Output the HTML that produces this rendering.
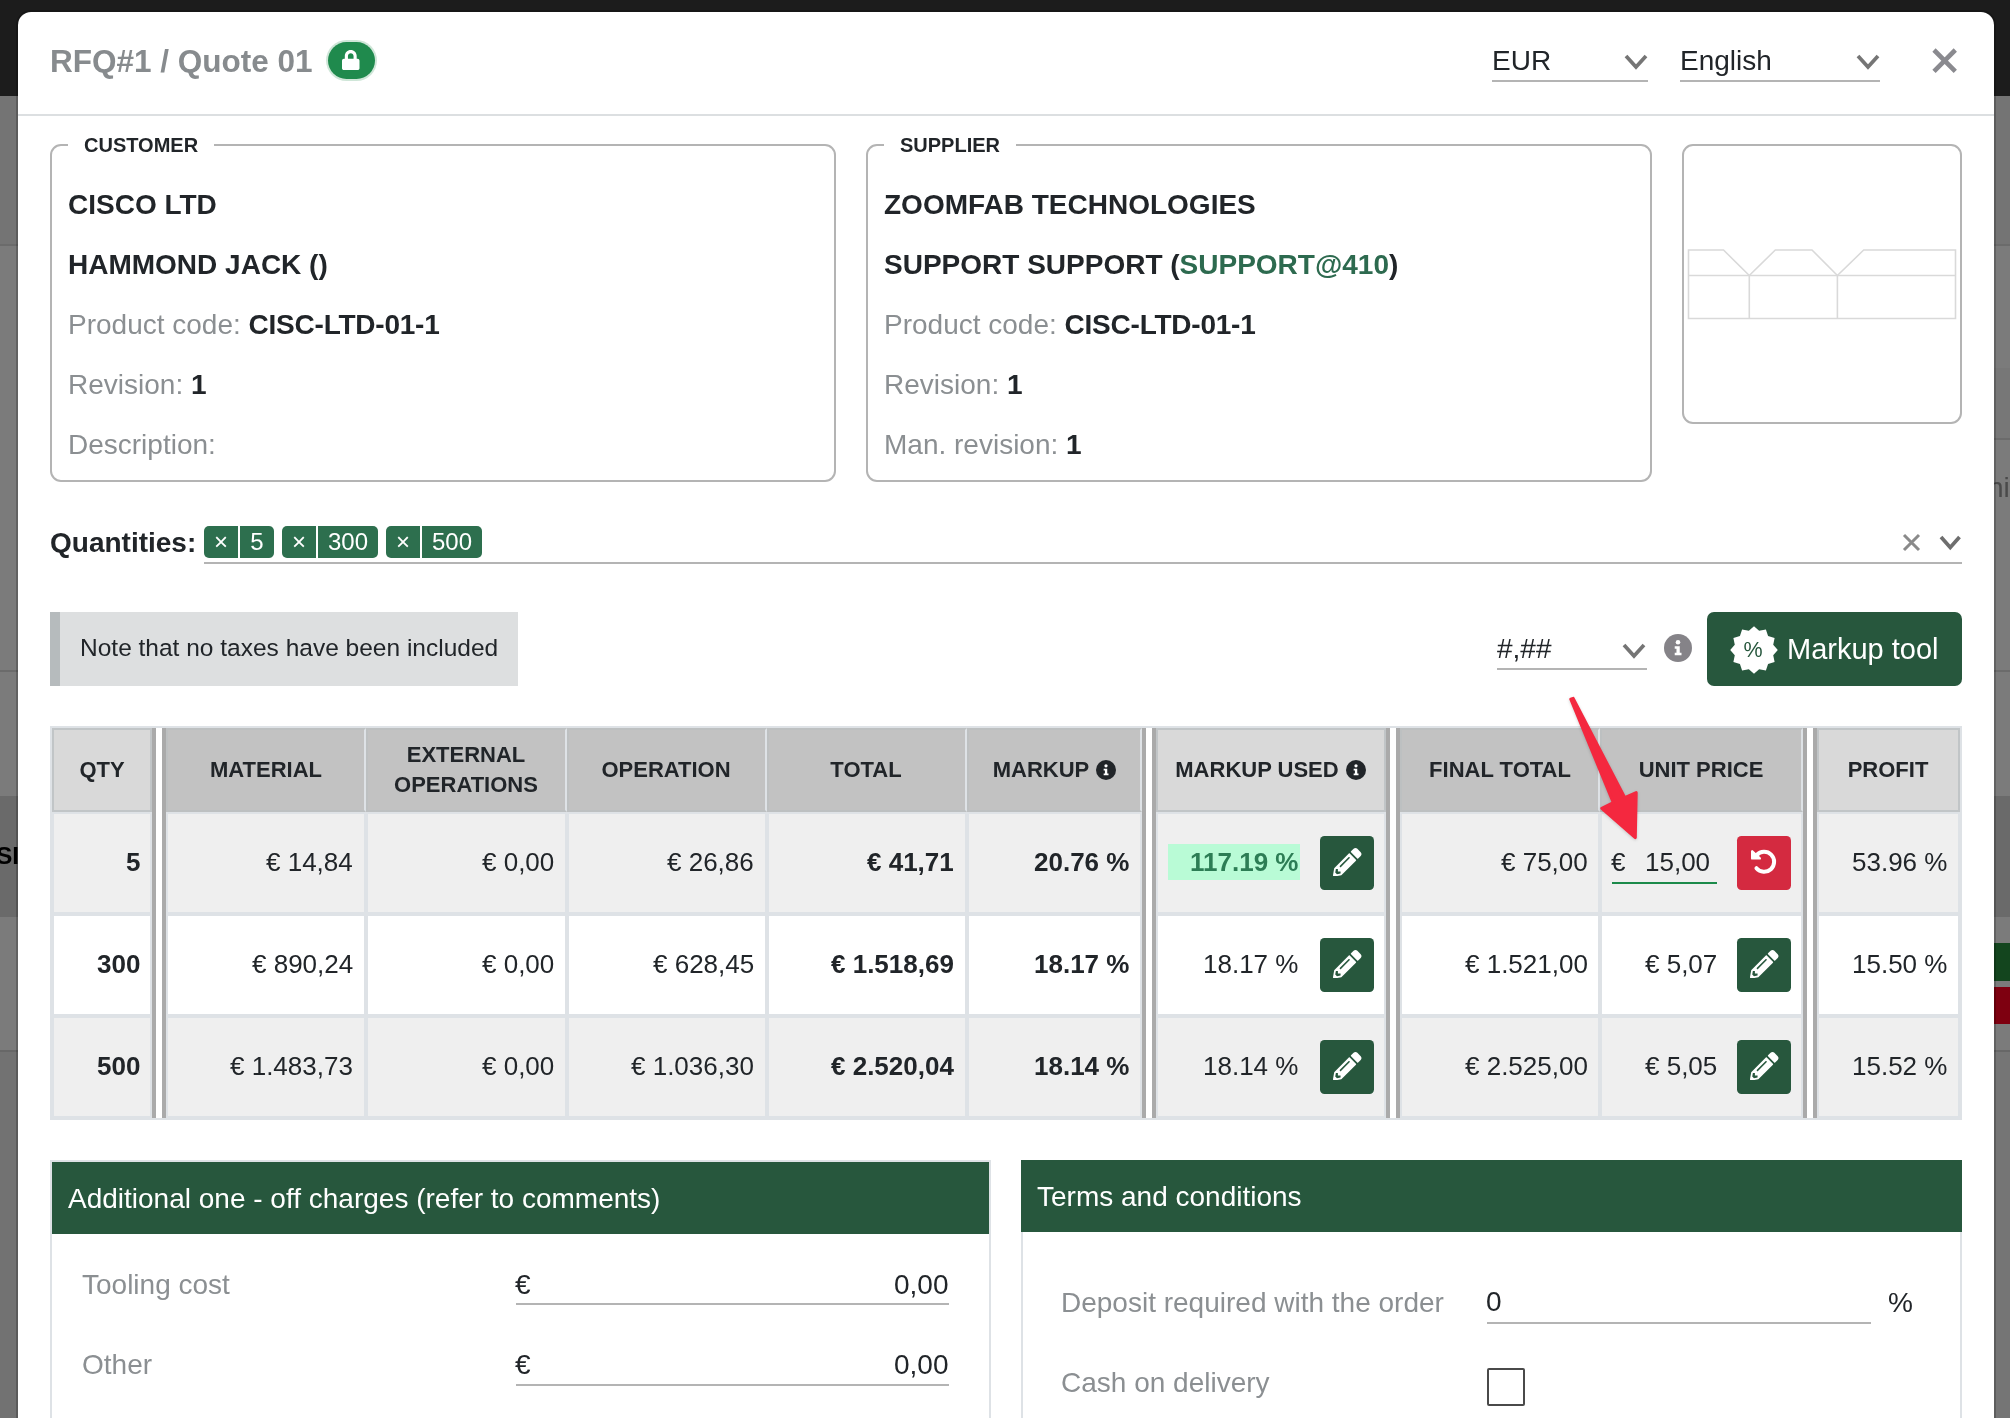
<!DOCTYPE html>
<html><head><meta charset="utf-8"><title>Quote</title><style>
*{box-sizing:border-box;margin:0;padding:0}
html,body{width:2010px;height:1418px;overflow:hidden;background:#7b7b7b}
body{font-family:"Liberation Sans",sans-serif;font-size:28px;color:#212529;position:relative}
.a{position:absolute}
.t{position:absolute;white-space:nowrap;height:100px;line-height:100px;will-change:transform}
.b{font-weight:700}
.r{text-align:right}
.c{text-align:center}
.mut{color:#8b8f92}
</style></head><body>
<div class="a" style="left:0px;top:0px;width:2010px;height:96px;background:#1c1c1c"></div>
<div class="a" style="left:0px;top:96px;width:18px;height:148px;background:#747474"></div>
<div class="a" style="left:0px;top:244px;width:18px;height:2px;background:#6b6b6b"></div>
<div class="a" style="left:0px;top:670px;width:18px;height:2px;background:#6b6b6b"></div>
<div class="a" style="left:0px;top:796px;width:18px;height:121px;background:#6a6a6a"></div>
<div class="a" style="left:0px;top:1050px;width:18px;height:368px;background:#727272"></div>
<div class="a" style="left:0px;top:1050px;width:18px;height:2px;background:#676767"></div>
<div class="t b" style="left:-4.5px;top:805.5px;font-size:24.5px;color:#000">SI</div>
<div class="a" style="left:1994px;top:96px;width:16px;height:148px;background:#747474"></div>
<div class="a" style="left:1994px;top:244px;width:16px;height:2px;background:#6b6b6b"></div>
<div class="a" style="left:1994px;top:368px;width:16px;height:70px;background:#777777"></div>
<div class="a" style="left:1994px;top:438px;width:16px;height:2px;background:#6b6b6b"></div>
<div class="a" style="left:1994px;top:670px;width:16px;height:2px;background:#6b6b6b"></div>
<div class="a" style="left:1994px;top:796px;width:16px;height:121px;background:#6a6a6a"></div>
<div class="a" style="left:1994px;top:943px;width:16px;height:38px;background:#13451e"></div>
<div class="a" style="left:1994px;top:987px;width:16px;height:37px;background:#7e0010"></div>
<div class="a" style="left:1994px;top:1050px;width:16px;height:368px;background:#757575"></div>
<div class="a" style="left:1994px;top:1050px;width:16px;height:2px;background:#676767"></div>
<div class="t " style="left:1987.5px;top:438px;font-size:28px;color:#4a4a4a">ni</div>
<div class="a" style="left:16px;top:10px;width:1980px;height:1490px;background:#fff;background-clip:padding-box;border:2px solid rgba(0,0,0,.2);border-radius:15px 15px 0 0"></div>
<div class="a" style="left:18px;top:114px;width:1976px;height:2px;background:#dcdfe1"></div>
<div class="t b" style="left:50px;top:10.5px;font-size:31.5px;color:#878b8e">RFQ#1 / Quote 01</div>
<div class="t " style="left:1492px;top:10.5px;font-size:28px;">EUR</div>
<div class="a" style="left:1492px;top:80px;width:156px;height:2px;background:#b4b4b4"></div>
<svg class="a" style="left:1622.0px;top:51.5px" width="28" height="19" viewBox="-4 -4 28 19"><path d="M0 0 L10.0 11 L20 0" fill="none" stroke="#757575" stroke-width="3.7" stroke-linecap="butt" stroke-linejoin="miter"/></svg>
<div class="t " style="left:1680px;top:10.5px;font-size:28px;">English</div>
<div class="a" style="left:1680px;top:80px;width:200px;height:2px;background:#b4b4b4"></div>
<svg class="a" style="left:1854.0px;top:51.5px" width="28" height="19" viewBox="-4 -4 28 19"><path d="M0 0 L10.0 11 L20 0" fill="none" stroke="#757575" stroke-width="3.7" stroke-linecap="butt" stroke-linejoin="miter"/></svg>
<svg class="a" style="left:1930.35px;top:45.550000000000004px" width="29.3" height="29.3" viewBox="-4 -4 29.3 29.3"><path d="M0 0 L21.3 21.3 M21.3 0 L0 21.3" fill="none" stroke="#8a8a8f" stroke-width="4.6" stroke-linecap="butt"/></svg>
<div class="a" style="left:328px;top:42px;width:47px;height:37px;background:#1f8a4d;border-radius:19px;box-shadow:0 0 0 2px #cfe6d8"></div>
<svg class="a" style="left:342.3px;top:50px" width="17.5" height="20" viewBox="0 0 448 512"><path fill="#fff" d="M400 224h-24v-72C376 68.200 307.800 0 224 0S72 68.200 72 152v72H48c-26.500 0-48 21.500-48 48v192c0 26.500 21.500 48 48 48h352c26.500 0 48-21.500 48-48V272c0-26.500-21.500-48-48-48zm-104 0H152v-72c0-39.700 32.300-72 72-72s72 32.300 72 72v72z"/></svg>
<div class="a" style="left:50px;top:144px;width:786px;height:338px;border:2px solid #b4b4b4;border-radius:11px"></div>
<div class="a" style="left:68px;top:142px;width:146px;height:6px;background:#fff"></div>
<div class="t b" style="left:84px;top:95px;font-size:20px;">CUSTOMER</div>
<div class="a" style="left:866px;top:144px;width:786px;height:338px;border:2px solid #b4b4b4;border-radius:11px"></div>
<div class="a" style="left:884px;top:142px;width:132px;height:6px;background:#fff"></div>
<div class="t b" style="left:900px;top:95px;font-size:20px;">SUPPLIER</div>
<div class="a" style="left:1682px;top:144px;width:280px;height:280px;border:2px solid #b4b4b4;border-radius:11px"></div>
<svg class="a" style="left:1682px;top:240px" width="280" height="90" viewBox="1682 240 280 90"><g fill="none" stroke="#d9d9d9" stroke-width="1.6"><path d="M1688.500 318.500 V250 H1723.500 L1749.300 275.500 L1775.300 250 H1812 L1837.400 275.500 L1863.700 250 H1955.500 V318.500 Z"/><path d="M1688.500 275.500 H1955.500 M1749.300 275.500 V318.500 M1837.400 275.500 V318.500"/></g></svg>
<div class="t b" style="left:68px;top:155px;font-size:28px;">CISCO LTD</div>
<div class="t b" style="left:68px;top:215px;font-size:28px;">HAMMOND JACK ()</div>
<div class="t " style="left:68px;top:275px;font-size:28px;"><span class="mut">Product code:</span> <b style="letter-spacing:-0.23px">CISC-LTD-01-1</b></div>
<div class="t " style="left:68px;top:335px;font-size:28px;"><span class="mut">Revision:</span> <b>1</b></div>
<div class="t " style="left:68px;top:395px;font-size:28px;"><span class="mut">Description:</span></div>
<div class="t b" style="left:884px;top:155px;font-size:28px;">ZOOMFAB TECHNOLOGIES</div>
<div class="t b" style="left:884px;top:215px;font-size:28px;">SUPPORT SUPPORT (<span style="color:#2d6a4f">SUPPORT@410</span>)</div>
<div class="t " style="left:884px;top:275px;font-size:28px;"><span class="mut">Product code:</span> <b style="letter-spacing:-0.23px">CISC-LTD-01-1</b></div>
<div class="t " style="left:884px;top:335px;font-size:28px;"><span class="mut">Revision:</span> <b>1</b></div>
<div class="t " style="left:884px;top:395px;font-size:28px;"><span class="mut">Man. revision:</span> <b>1</b></div>
<div class="t b" style="left:50px;top:493px;font-size:28px;">Quantities:</div>
<div class="a" style="left:204px;top:562px;width:1758px;height:2px;background:#b4b4b4"></div>
<div class="a" style="left:204px;top:526px;width:34px;height:32px;background:#2d6f4e;border-radius:5px 0 0 5px"></div>
<div class="a" style="left:240px;top:526px;width:34px;height:32px;background:#2d6f4e;border-radius:0 5px 5px 0"></div>
<div class="t " style="left:-279.0px;width:1000px;text-align:center;top:492px;font-size:24px;color:#fff">×</div>
<div class="t " style="left:-243.0px;width:1000px;text-align:center;top:492px;font-size:24px;color:#fff">5</div>
<div class="a" style="left:282px;top:526px;width:34px;height:32px;background:#2d6f4e;border-radius:5px 0 0 5px"></div>
<div class="a" style="left:318px;top:526px;width:60px;height:32px;background:#2d6f4e;border-radius:0 5px 5px 0"></div>
<div class="t " style="left:-201.0px;width:1000px;text-align:center;top:492px;font-size:24px;color:#fff">×</div>
<div class="t " style="left:-152.0px;width:1000px;text-align:center;top:492px;font-size:24px;color:#fff">300</div>
<div class="a" style="left:386px;top:526px;width:34px;height:32px;background:#2d6f4e;border-radius:5px 0 0 5px"></div>
<div class="a" style="left:422px;top:526px;width:60px;height:32px;background:#2d6f4e;border-radius:0 5px 5px 0"></div>
<div class="t " style="left:-97.0px;width:1000px;text-align:center;top:492px;font-size:24px;color:#fff">×</div>
<div class="t " style="left:-48.0px;width:1000px;text-align:center;top:492px;font-size:24px;color:#fff">500</div>
<svg class="a" style="left:1899.5px;top:530.5px" width="23" height="23" viewBox="-4 -4 23 23"><path d="M0 0 L15 15 M15 0 L0 15" fill="none" stroke="#8a8a8a" stroke-width="3" stroke-linecap="butt"/></svg>
<svg class="a" style="left:1936.75px;top:532.55px" width="26.5" height="18.5" viewBox="-4 -4 26.5 18.5"><path d="M0 0 L9.25 10.5 L18.5 0" fill="none" stroke="#6e6e6e" stroke-width="3.7" stroke-linecap="butt" stroke-linejoin="miter"/></svg>
<div class="a" style="left:50px;top:612px;width:468px;height:74px;background:#dddfe0;border-left:10px solid #b6bbbd"></div>
<div class="t " style="left:80px;top:598px;font-size:24.5px;">Note that no taxes have been included</div>
<div class="t " style="left:1497px;top:599px;font-size:28px;">#,##</div>
<div class="a" style="left:1497px;top:668px;width:150px;height:2px;background:#b4b4b4"></div>
<svg class="a" style="left:1620.0px;top:640.5px" width="28" height="19" viewBox="-4 -4 28 19"><path d="M0 0 L10.0 11 L20 0" fill="none" stroke="#757575" stroke-width="3.7" stroke-linecap="butt" stroke-linejoin="miter"/></svg>
<svg class="a" style="left:1664px;top:634px" width="28" height="28" viewBox="0 0 512 512"><circle cx="256" cy="256" r="256" fill="#858388"/><circle cx="256" cy="150" r="42" fill="#fff"/><path fill="#fff" d="M196 226 h92 v118 h32 v44 h-124 v-44 h32 v-74 h-32 z"/></svg>
<div class="a" style="left:1707px;top:612px;width:255px;height:74px;background:#27573d;border-radius:7px"></div>
<div class="t " style="left:1787px;top:599px;font-size:29px;color:#fff">Markup tool</div>
<svg class="a" style="left:1723.9px;top:620px" width="60" height="60" viewBox="1723.9 620 60 60"><polygon points="1753.90,626.20 1759.05,630.78 1765.80,629.39 1767.97,635.93 1774.51,638.10 1773.12,644.85 1777.70,650.00 1773.12,655.15 1774.51,661.90 1767.97,664.07 1765.80,670.61 1759.05,669.22 1753.90,673.80 1748.75,669.22 1742.00,670.61 1739.83,664.07 1733.29,661.90 1734.68,655.15 1730.10,650.00 1734.68,644.85 1733.29,638.10 1739.83,635.93 1742.00,629.39 1748.75,630.78" fill="#fff"/></svg>
<div class="t " style="left:1253px;width:1000px;text-align:center;top:599.5px;font-size:21.5px;color:#27573d">%</div>
<div class="a" style="left:50px;top:726px;width:1912px;height:394px;background:#dee2e6"></div>
<div class="a" style="left:52px;top:728px;width:100px;height:84px;background:#d9d9d9;border:2px solid #c1c5c7;"></div>
<div class="a" style="left:54px;top:814px;width:96px;height:98px;background:#efefef"></div>
<div class="a" style="left:54px;top:916px;width:96px;height:98px;background:#ffffff"></div>
<div class="a" style="left:54px;top:1018px;width:96px;height:98px;background:#efefef"></div>
<div class="a" style="left:166px;top:728px;width:200px;height:84px;background:#c2c2c2;border:2px solid #bdc0c1;border-right-color:#dee2e6;"></div>
<div class="a" style="left:168px;top:814px;width:196px;height:98px;background:#efefef"></div>
<div class="a" style="left:168px;top:916px;width:196px;height:98px;background:#ffffff"></div>
<div class="a" style="left:168px;top:1018px;width:196px;height:98px;background:#efefef"></div>
<div class="a" style="left:366px;top:728px;width:201px;height:84px;background:#c2c2c2;border:2px solid #bdc0c1;border-right-color:#dee2e6;"></div>
<div class="a" style="left:368px;top:814px;width:197px;height:98px;background:#efefef"></div>
<div class="a" style="left:368px;top:916px;width:197px;height:98px;background:#ffffff"></div>
<div class="a" style="left:368px;top:1018px;width:197px;height:98px;background:#efefef"></div>
<div class="a" style="left:567px;top:728px;width:200px;height:84px;background:#c2c2c2;border:2px solid #bdc0c1;border-right-color:#dee2e6;"></div>
<div class="a" style="left:569px;top:814px;width:196px;height:98px;background:#efefef"></div>
<div class="a" style="left:569px;top:916px;width:196px;height:98px;background:#ffffff"></div>
<div class="a" style="left:569px;top:1018px;width:196px;height:98px;background:#efefef"></div>
<div class="a" style="left:767px;top:728px;width:200px;height:84px;background:#c2c2c2;border:2px solid #bdc0c1;border-right-color:#dee2e6;"></div>
<div class="a" style="left:769px;top:814px;width:196px;height:98px;background:#efefef"></div>
<div class="a" style="left:769px;top:916px;width:196px;height:98px;background:#ffffff"></div>
<div class="a" style="left:769px;top:1018px;width:196px;height:98px;background:#efefef"></div>
<div class="a" style="left:967px;top:728px;width:175px;height:84px;background:#c2c2c2;border:2px solid #bdc0c1;border-right-color:#dee2e6;"></div>
<div class="a" style="left:969px;top:814px;width:171px;height:98px;background:#efefef"></div>
<div class="a" style="left:969px;top:916px;width:171px;height:98px;background:#ffffff"></div>
<div class="a" style="left:969px;top:1018px;width:171px;height:98px;background:#efefef"></div>
<div class="a" style="left:1156px;top:728px;width:230px;height:84px;background:#d9d9d9;border:2px solid #c1c5c7;"></div>
<div class="a" style="left:1158px;top:814px;width:226px;height:98px;background:#efefef"></div>
<div class="a" style="left:1158px;top:916px;width:226px;height:98px;background:#ffffff"></div>
<div class="a" style="left:1158px;top:1018px;width:226px;height:98px;background:#efefef"></div>
<div class="a" style="left:1400px;top:728px;width:200px;height:84px;background:#c2c2c2;border:2px solid #bdc0c1;border-right-color:#dee2e6;"></div>
<div class="a" style="left:1402px;top:814px;width:196px;height:98px;background:#efefef"></div>
<div class="a" style="left:1402px;top:916px;width:196px;height:98px;background:#ffffff"></div>
<div class="a" style="left:1402px;top:1018px;width:196px;height:98px;background:#efefef"></div>
<div class="a" style="left:1600px;top:728px;width:203px;height:84px;background:#c2c2c2;border:2px solid #bdc0c1;border-right-color:#dee2e6;"></div>
<div class="a" style="left:1602px;top:814px;width:199px;height:98px;background:#efefef"></div>
<div class="a" style="left:1602px;top:916px;width:199px;height:98px;background:#ffffff"></div>
<div class="a" style="left:1602px;top:1018px;width:199px;height:98px;background:#efefef"></div>
<div class="a" style="left:1817px;top:728px;width:143px;height:84px;background:#d9d9d9;border:2px solid #c1c5c7;"></div>
<div class="a" style="left:1819px;top:814px;width:139px;height:98px;background:#efefef"></div>
<div class="a" style="left:1819px;top:916px;width:139px;height:98px;background:#ffffff"></div>
<div class="a" style="left:1819px;top:1018px;width:139px;height:98px;background:#efefef"></div>
<div class="a" style="left:152px;top:728px;width:4px;height:390px;background:#aaaaaa"></div>
<div class="a" style="left:156px;top:728px;width:6px;height:390px;background:#fff"></div>
<div class="a" style="left:162px;top:728px;width:4px;height:390px;background:#aaaaaa"></div>
<div class="a" style="left:1142px;top:728px;width:4px;height:390px;background:#aaaaaa"></div>
<div class="a" style="left:1146px;top:728px;width:6px;height:390px;background:#fff"></div>
<div class="a" style="left:1152px;top:728px;width:4px;height:390px;background:#aaaaaa"></div>
<div class="a" style="left:1386px;top:728px;width:4px;height:390px;background:#aaaaaa"></div>
<div class="a" style="left:1390px;top:728px;width:6px;height:390px;background:#fff"></div>
<div class="a" style="left:1396px;top:728px;width:4px;height:390px;background:#aaaaaa"></div>
<div class="a" style="left:1803px;top:728px;width:4px;height:390px;background:#aaaaaa"></div>
<div class="a" style="left:1807px;top:728px;width:6px;height:390px;background:#fff"></div>
<div class="a" style="left:1813px;top:728px;width:4px;height:390px;background:#aaaaaa"></div>
<div class="t b" style="left:-398px;width:1000px;text-align:center;top:720px;font-size:22px;">QTY</div>
<div class="t b" style="left:-234px;width:1000px;text-align:center;top:720px;font-size:22px;">MATERIAL</div>
<div class="t b" style="left:-34px;width:1000px;text-align:center;top:705px;font-size:22px;">EXTERNAL</div>
<div class="t b" style="left:-34px;width:1000px;text-align:center;top:735px;font-size:22px;">OPERATIONS</div>
<div class="t b" style="left:166px;width:1000px;text-align:center;top:720px;font-size:22px;">OPERATION</div>
<div class="t b" style="left:366px;width:1000px;text-align:center;top:720px;font-size:22px;">TOTAL</div>
<div class="t b" style="left:541px;width:1000px;text-align:center;top:720px;font-size:22px;">MARKUP</div>
<svg class="a" style="left:1096px;top:760px" width="20" height="20" viewBox="0 0 512 512"><circle cx="256" cy="256" r="256" fill="#212529"/><circle cx="256" cy="150" r="42" fill="#fff"/><path fill="#fff" d="M196 226 h92 v118 h32 v44 h-124 v-44 h32 v-74 h-32 z"/></svg>
<div class="t b" style="left:757px;width:1000px;text-align:center;top:720px;font-size:22px;">MARKUP USED</div>
<svg class="a" style="left:1346px;top:760px" width="20" height="20" viewBox="0 0 512 512"><circle cx="256" cy="256" r="256" fill="#212529"/><circle cx="256" cy="150" r="42" fill="#fff"/><path fill="#fff" d="M196 226 h92 v118 h32 v44 h-124 v-44 h32 v-74 h-32 z"/></svg>
<div class="t b" style="left:1000px;width:1000px;text-align:center;top:720px;font-size:22px;">FINAL TOTAL</div>
<div class="t b" style="left:1201px;width:1000px;text-align:center;top:720px;font-size:22px;">UNIT PRICE</div>
<div class="t b" style="left:1388px;width:1000px;text-align:center;top:720px;font-size:22px;">PROFIT</div>
<div class="t b" style="right:1870px;text-align:right;top:812px;font-size:26px;">5</div>
<div class="t " style="right:1657px;text-align:right;top:812px;font-size:26px;">€ 14,84</div>
<div class="t " style="right:1456px;text-align:right;top:812px;font-size:26px;">€ 0,00</div>
<div class="t " style="right:1256px;text-align:right;top:812px;font-size:26px;">€ 26,86</div>
<div class="t b" style="right:1056px;text-align:right;top:812px;font-size:26px;">€ 41,71</div>
<div class="t b" style="right:881px;text-align:right;top:812px;font-size:26px;">20.76 %</div>
<div class="a" style="left:1168px;top:844px;width:132px;height:36px;background:#b9fbd6"></div>
<div class="t b" style="right:712px;text-align:right;top:812px;font-size:26px;color:#2d7d55">117.19 %</div>
<div class="a" style="left:1320px;top:836px;width:54px;height:54px;background:#27573d;border-radius:4.5px"></div>
<svg class="a" style="left:1333px;top:847.5px" width="28.5" height="28.5" viewBox="0 0 512 512"><path fill="#fff" d="M497.900 142.100l-46.100 46.100c-4.700 4.700-12.300 4.700-17 0l-111-111c-4.700-4.700-4.700-12.300 0-17l46.100-46.100c18.700-18.700 49.100-18.700 67.900 0l60.100 60.100c18.800 18.700 18.800 49.100 0 67.900zM284.200 99.800L21.600 362.400.4 483.900c-2.900 16.400 11.400 30.600 27.800 27.800l121.500-21.300 262.600-262.600c4.700-4.700 4.700-12.300 0-17l-111-111c-4.800-4.700-12.400-4.700-17.100 0zM124.100 339.900c-5.500-5.500-5.500-14.300 0-19.800l154-154c5.500-5.500 14.300-5.500 19.800 0s5.500 14.300 0 19.800l-154 154c-5.500 5.500-14.300 5.500-19.800 0zM88 424h48v36.300l-64.500 11.300-31.100-31.100L51.700 376H88v48z"/></svg>
<div class="t " style="right:422px;text-align:right;top:812px;font-size:26px;">€ 75,00</div>
<div class="t " style="left:1611px;top:812px;font-size:26px;">€</div>
<div class="t " style="right:300px;text-align:right;top:812px;font-size:26px;">15,00</div>
<div class="a" style="left:1612px;top:882px;width:105px;height:2px;background:#1b8a4a"></div>
<div class="a" style="left:1737px;top:836px;width:54px;height:54px;background:#d42a40;border-radius:4.5px"></div>
<svg class="a" style="left:1737px;top:836px" width="54" height="54" viewBox="0 0 54 54"><path d="M19.670 19.110 A10 10 0 1 1 19.440 32.230" fill="none" stroke="#fff" stroke-width="4.000" stroke-linecap="round"/><path d="M15.200 15.300 V22.400 H22.800 Z" fill="#fff" stroke="#fff" stroke-width="2.400" stroke-linejoin="round"/></svg>
<div class="t " style="right:63px;text-align:right;top:812px;font-size:26px;">53.96 %</div>
<div class="t b" style="right:1870px;text-align:right;top:914px;font-size:26px;">300</div>
<div class="t " style="right:1657px;text-align:right;top:914px;font-size:26px;">€ 890,24</div>
<div class="t " style="right:1456px;text-align:right;top:914px;font-size:26px;">€ 0,00</div>
<div class="t " style="right:1256px;text-align:right;top:914px;font-size:26px;">€ 628,45</div>
<div class="t b" style="right:1056px;text-align:right;top:914px;font-size:26px;">€ 1.518,69</div>
<div class="t b" style="right:881px;text-align:right;top:914px;font-size:26px;">18.17 %</div>
<div class="t " style="right:712px;text-align:right;top:914px;font-size:26px;">18.17 %</div>
<div class="a" style="left:1320px;top:938px;width:54px;height:54px;background:#27573d;border-radius:4.5px"></div>
<svg class="a" style="left:1333px;top:949.5px" width="28.5" height="28.5" viewBox="0 0 512 512"><path fill="#fff" d="M497.900 142.100l-46.100 46.100c-4.700 4.700-12.300 4.700-17 0l-111-111c-4.700-4.700-4.700-12.300 0-17l46.100-46.100c18.700-18.700 49.100-18.700 67.900 0l60.100 60.100c18.800 18.700 18.800 49.100 0 67.900zM284.200 99.800L21.600 362.400.4 483.900c-2.900 16.400 11.400 30.600 27.800 27.800l121.500-21.300 262.600-262.600c4.700-4.700 4.700-12.300 0-17l-111-111c-4.800-4.700-12.400-4.700-17.100 0zM124.100 339.900c-5.500-5.500-5.500-14.300 0-19.800l154-154c5.500-5.500 14.300-5.500 19.800 0s5.500 14.300 0 19.800l-154 154c-5.500 5.500-14.300 5.500-19.800 0zM88 424h48v36.300l-64.500 11.300-31.100-31.100L51.700 376H88v48z"/></svg>
<div class="t " style="right:422px;text-align:right;top:914px;font-size:26px;">€ 1.521,00</div>
<div class="t " style="right:293px;text-align:right;top:914px;font-size:26px;">€ 5,07</div>
<div class="a" style="left:1737px;top:938px;width:54px;height:54px;background:#27573d;border-radius:4.5px"></div>
<svg class="a" style="left:1750px;top:949.5px" width="28.5" height="28.5" viewBox="0 0 512 512"><path fill="#fff" d="M497.900 142.100l-46.100 46.100c-4.700 4.700-12.300 4.700-17 0l-111-111c-4.700-4.700-4.700-12.300 0-17l46.100-46.100c18.700-18.700 49.100-18.700 67.900 0l60.100 60.100c18.800 18.700 18.800 49.100 0 67.900zM284.200 99.800L21.600 362.400.4 483.900c-2.900 16.400 11.400 30.600 27.800 27.800l121.500-21.300 262.600-262.600c4.700-4.700 4.700-12.300 0-17l-111-111c-4.800-4.700-12.400-4.700-17.100 0zM124.100 339.900c-5.500-5.500-5.500-14.300 0-19.800l154-154c5.500-5.500 14.300-5.500 19.800 0s5.500 14.300 0 19.800l-154 154c-5.500 5.500-14.300 5.500-19.800 0zM88 424h48v36.300l-64.500 11.300-31.100-31.100L51.700 376H88v48z"/></svg>
<div class="t " style="right:63px;text-align:right;top:914px;font-size:26px;">15.50 %</div>
<div class="t b" style="right:1870px;text-align:right;top:1016px;font-size:26px;">500</div>
<div class="t " style="right:1657px;text-align:right;top:1016px;font-size:26px;">€ 1.483,73</div>
<div class="t " style="right:1456px;text-align:right;top:1016px;font-size:26px;">€ 0,00</div>
<div class="t " style="right:1256px;text-align:right;top:1016px;font-size:26px;">€ 1.036,30</div>
<div class="t b" style="right:1056px;text-align:right;top:1016px;font-size:26px;">€ 2.520,04</div>
<div class="t b" style="right:881px;text-align:right;top:1016px;font-size:26px;">18.14 %</div>
<div class="t " style="right:712px;text-align:right;top:1016px;font-size:26px;">18.14 %</div>
<div class="a" style="left:1320px;top:1040px;width:54px;height:54px;background:#27573d;border-radius:4.5px"></div>
<svg class="a" style="left:1333px;top:1051.5px" width="28.5" height="28.5" viewBox="0 0 512 512"><path fill="#fff" d="M497.900 142.100l-46.100 46.100c-4.700 4.700-12.300 4.700-17 0l-111-111c-4.700-4.700-4.700-12.300 0-17l46.100-46.100c18.700-18.700 49.100-18.700 67.900 0l60.100 60.100c18.800 18.700 18.800 49.100 0 67.900zM284.200 99.800L21.600 362.400.4 483.900c-2.900 16.400 11.400 30.600 27.800 27.800l121.500-21.300 262.600-262.600c4.700-4.700 4.700-12.300 0-17l-111-111c-4.800-4.700-12.400-4.700-17.100 0zM124.100 339.900c-5.500-5.500-5.500-14.300 0-19.800l154-154c5.500-5.500 14.300-5.500 19.800 0s5.500 14.300 0 19.800l-154 154c-5.500 5.500-14.300 5.500-19.800 0zM88 424h48v36.300l-64.500 11.300-31.100-31.100L51.700 376H88v48z"/></svg>
<div class="t " style="right:422px;text-align:right;top:1016px;font-size:26px;">€ 2.525,00</div>
<div class="t " style="right:293px;text-align:right;top:1016px;font-size:26px;">€ 5,05</div>
<div class="a" style="left:1737px;top:1040px;width:54px;height:54px;background:#27573d;border-radius:4.5px"></div>
<svg class="a" style="left:1750px;top:1051.5px" width="28.5" height="28.5" viewBox="0 0 512 512"><path fill="#fff" d="M497.900 142.100l-46.100 46.100c-4.700 4.700-12.300 4.700-17 0l-111-111c-4.700-4.700-4.700-12.300 0-17l46.100-46.100c18.700-18.700 49.100-18.700 67.900 0l60.100 60.100c18.800 18.700 18.800 49.100 0 67.900zM284.200 99.800L21.600 362.400.4 483.900c-2.900 16.400 11.400 30.600 27.800 27.800l121.500-21.300 262.600-262.600c4.700-4.700 4.700-12.300 0-17l-111-111c-4.800-4.700-12.400-4.700-17.100 0zM124.100 339.900c-5.500-5.500-5.500-14.300 0-19.800l154-154c5.500-5.500 14.300-5.500 19.800 0s5.500 14.300 0 19.800l-154 154c-5.500 5.500-14.300 5.500-19.800 0zM88 424h48v36.300l-64.500 11.300-31.100-31.100L51.700 376H88v48z"/></svg>
<div class="t " style="right:63px;text-align:right;top:1016px;font-size:26px;">15.52 %</div>
<div class="a" style="left:50px;top:1160px;width:941px;height:340px;background:#fff;border:2px solid #dee2e6"></div>
<div class="a" style="left:52px;top:1162px;width:937px;height:72px;background:#27573d"></div>
<div class="t " style="left:68px;top:1149px;font-size:28px;color:#fff">Additional one - off charges (refer to comments)</div>
<div class="t mut" style="left:82px;top:1235px;font-size:28px;">Tooling cost</div>
<div class="t " style="left:515px;top:1235px;font-size:28px;">€</div>
<div class="t " style="right:1062px;text-align:right;top:1235px;font-size:28px;">0,00</div>
<div class="a" style="left:516px;top:1303px;width:433px;height:2px;background:#b4b4b4"></div>
<div class="t mut" style="left:82px;top:1315px;font-size:28px;">Other</div>
<div class="t " style="left:515px;top:1315px;font-size:28px;">€</div>
<div class="t " style="right:1062px;text-align:right;top:1315px;font-size:28px;">0,00</div>
<div class="a" style="left:516px;top:1384px;width:433px;height:2px;background:#b4b4b4"></div>
<div class="a" style="left:1021px;top:1160px;width:941px;height:340px;background:#fff;border:2px solid #dee2e6"></div>
<div class="a" style="left:1021px;top:1160px;width:941px;height:72px;background:#27573d"></div>
<div class="t " style="left:1037px;top:1147px;font-size:28px;color:#fff">Terms and conditions</div>
<div class="t mut" style="left:1061px;top:1253px;font-size:28px;">Deposit required with the order</div>
<div class="t " style="left:1486px;top:1252px;font-size:28px;">0</div>
<div class="a" style="left:1487px;top:1322px;width:384px;height:2px;background:#b4b4b4"></div>
<div class="t " style="left:1888px;top:1253px;font-size:28px;">%</div>
<div class="t mut" style="left:1061px;top:1333px;font-size:28px;">Cash on delivery</div>
<div class="a" style="left:1487px;top:1368px;width:38px;height:38px;border:2px solid #4a4a4a;border-radius:2px;background:#fff"></div>
<svg class="a" style="left:1540px;top:680px;filter:drop-shadow(0 1px 1.5px rgba(0,0,0,.18))" width="140" height="180" viewBox="1540 680 140 180"><path d="M1570.800 699.200 L1613.300 802.600 L1601.800 808.300 L1635.300 837.600 L1636.200 792.600 L1624.800 797.700 L1573.200 698.400 Z" fill="#f4283f" stroke="#f4283f" stroke-width="3" stroke-linejoin="round"/></svg>
</body></html>
